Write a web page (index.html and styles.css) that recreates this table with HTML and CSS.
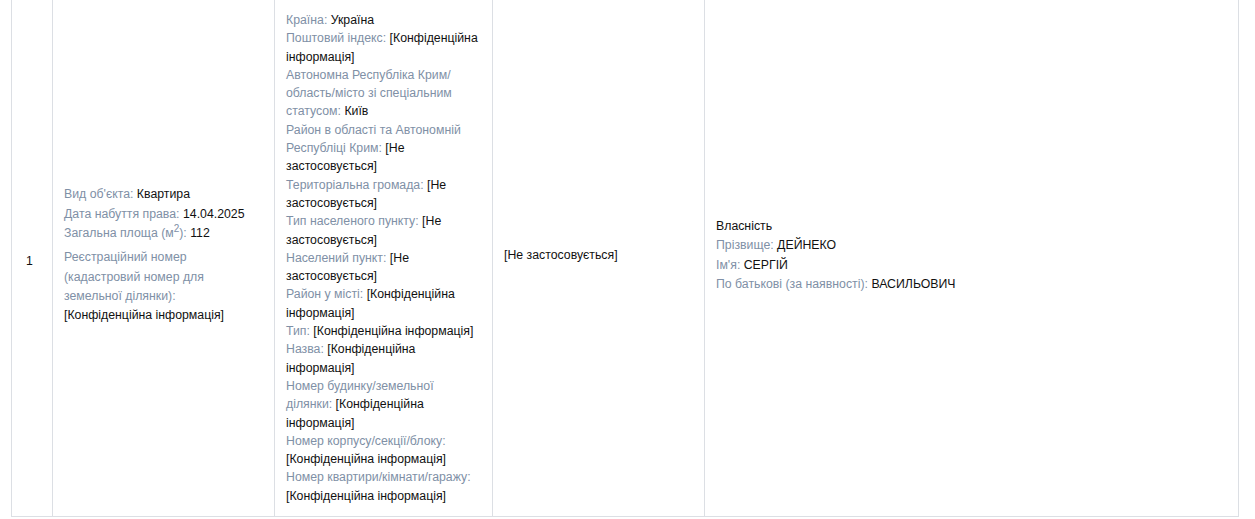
FILE: index.html
```html
<!DOCTYPE html>
<html lang="uk">

<head>
    <meta charset="UTF-8">
    <meta name="viewport" content="width=device-width, initial-scale=1.0">
    <title>Відомості про право власності</title>
    <link rel="stylesheet" href="styles.css">
</head>

<body>
    <div class="wrapper">
        <table class="rights-table">
            <colgroup>
                <col class="col-num">
                <col class="col-object">
                <col class="col-address">
                <col class="col-extra">
                <col class="col-owner">
            </colgroup>
            <tr>
                <td class="num">1</td>
                <td class="object">
                    <div class="item"><span class="label">Вид об'єкта:</span> Квартира</div>
                    <div class="item"><span class="label">Дата набуття права:</span> 14.04.2025</div>
                    <div class="item"><span class="label">Загальна площа (м<sup>2</sup>):</span> 112</div>
                    <div class="item reg"><span class="label">Реєстраційний номер (кадастровий номер для земельної ділянки):</span> [Конфіденційна інформація]</div>
                </td>
                <td class="address">
                    <span class="label">Країна:</span> Україна<br>
                    <span class="label">Поштовий індекс:</span> [Конфіденційна інформація]<br>
                    <span class="label">Автономна Республіка Крим/ область/місто зі спеціальним статусом:</span> Київ<br>
                    <span class="label">Район в області та Автономній Республіці Крим:</span> [Не застосовується]<br>
                    <span class="label">Територіальна громада:</span> [Не застосовується]<br>
                    <span class="label">Тип населеного пункту:</span> [Не застосовується]<br>
                    <span class="label">Населений пункт:</span> [Не застосовується]<br>
                    <span class="label">Район у місті:</span> [Конфіденційна інформація]<br>
                    <span class="label">Тип:</span> [Конфіденційна інформація]<br>
                    <span class="label">Назва:</span> [Конфіденційна інформація]<br>
                    <span class="label">Номер будинку/земельної ділянки:</span> [Конфіденційна інформація]<br>
                    <span class="label">Номер корпусу/секції/блоку:</span> [Конфіденційна інформація]<br>
                    <span class="label">Номер квартири/кімнати/гаражу:</span> [Конфіденційна інформація]
                </td>
                <td class="extra">[Не застосовується]</td>
                <td class="owner">
                    <div class="item">Власність</div>
                    <div class="item"><span class="label">Прізвище:</span> ДЕЙНЕКО</div>
                    <div class="item"><span class="label">Ім'я:</span> СЕРГІЙ</div>
                    <div class="item"><span class="label">По батькові (за наявності):</span> ВАСИЛЬОВИЧ</div>
                </td>
            </tr>
        </table>
    </div>
</body>

</html>
```

FILE: styles.css
```css
body {
    font-family: "Liberation Sans", Arial, sans-serif;
    font-size: 12.3px;
    color: #111;
    background-color: #fff;
    margin: 0;
}

.wrapper {
    padding: 0 16px 0 11px;
}

.rights-table {
    width: 1228px;
    border-collapse: collapse;
    table-layout: fixed;
    margin-top: -3px;
}

.col-num {
    width: 41px;
}

.col-object {
    width: 222px;
}

.col-address {
    width: 218px;
}

.col-extra {
    width: 212px;
}

td {
    border: 1px solid #dcdfe4;
    padding: 11px 12px 14px 11px;
    vertical-align: middle;
    line-height: 18.3px;
}

.address {
    padding-top: 13px;
    padding-bottom: 11px;
}

.num {
    padding: 17px 8px 8px 14px;
}

.label {
    color: #8090a6;
}

.object .item,
.owner .item {
    line-height: 19.3px;
}

.object .reg {
    margin-top: 5px;
}

sup {
    font-size: 10px;
    line-height: 0;
    vertical-align: 5px;
}
```
